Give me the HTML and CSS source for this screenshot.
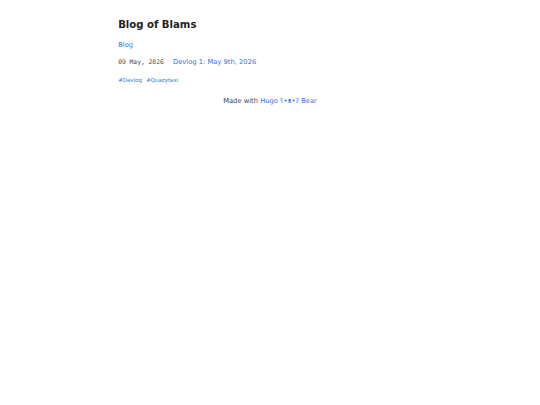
FILE: index.html
```html
<!DOCTYPE html>
<html lang="en">
<head>
<meta charset="utf-8">
<title>Blog of Blams</title>
<link rel="stylesheet" href="styles.css">
</head>
<body>
<header>
  <a href="#" class="title"><h2>Blog of Blams</h2></a>
  <nav><a href="#">Blog</a></nav>
</header>
<main>
  <ul class="blog-posts">
    <li><span><time class="post-date">09 May, 2026</time></span><a href="#">Devlog 1: May 9th, 2026</a></li>
  </ul>
  <div class="tags"><a class="blog-tag" href="#">#Devlog</a>&nbsp;&nbsp;<a class="blog-tag" href="#">#Quazytaxi</a></div>
</main>
<footer>Made with <a href="#">Hugo ʕ•ᴥ•ʔ Bear</a></footer>
</body>
</html>
```
FILE: styles.css
```css
html {
  background: #fff;
}
body {
  font-family: "DejaVu Sans", Verdana, sans-serif;
  font-size: 6.75px;
  margin: 0 auto;
  padding: 8.4375px;
  max-width: 303.75px;
  text-align: left;
  background-color: #fff;
  line-height: 1.5;
  color: #444;
}
h2 {
  font-size: 10.125px;
  margin: 0.83em 0;
  color: #222;
  font-weight: bold;
}
a {
  color: #3273dc;
  text-decoration: none;
}
.title {
  text-decoration: none;
}
nav a {
  margin-right: 3.375px;
}
main {
  line-height: 1.6;
}
.blog-posts {
  list-style-type: none;
  padding: 0;
  margin: 1em 0;
}
.blog-posts li {
  display: flex;
}
.blog-posts li span {
  flex: 0 0 54.84px;
}
.post-date {
  font-family: "DejaVu Sans Mono", monospace;
  font-size: 6.328px;
  font-style: normal;
}
.blog-tag {
  font-size: 5.48px;
}
footer {
  padding: 10.55px;
  text-align: center;
}
```
